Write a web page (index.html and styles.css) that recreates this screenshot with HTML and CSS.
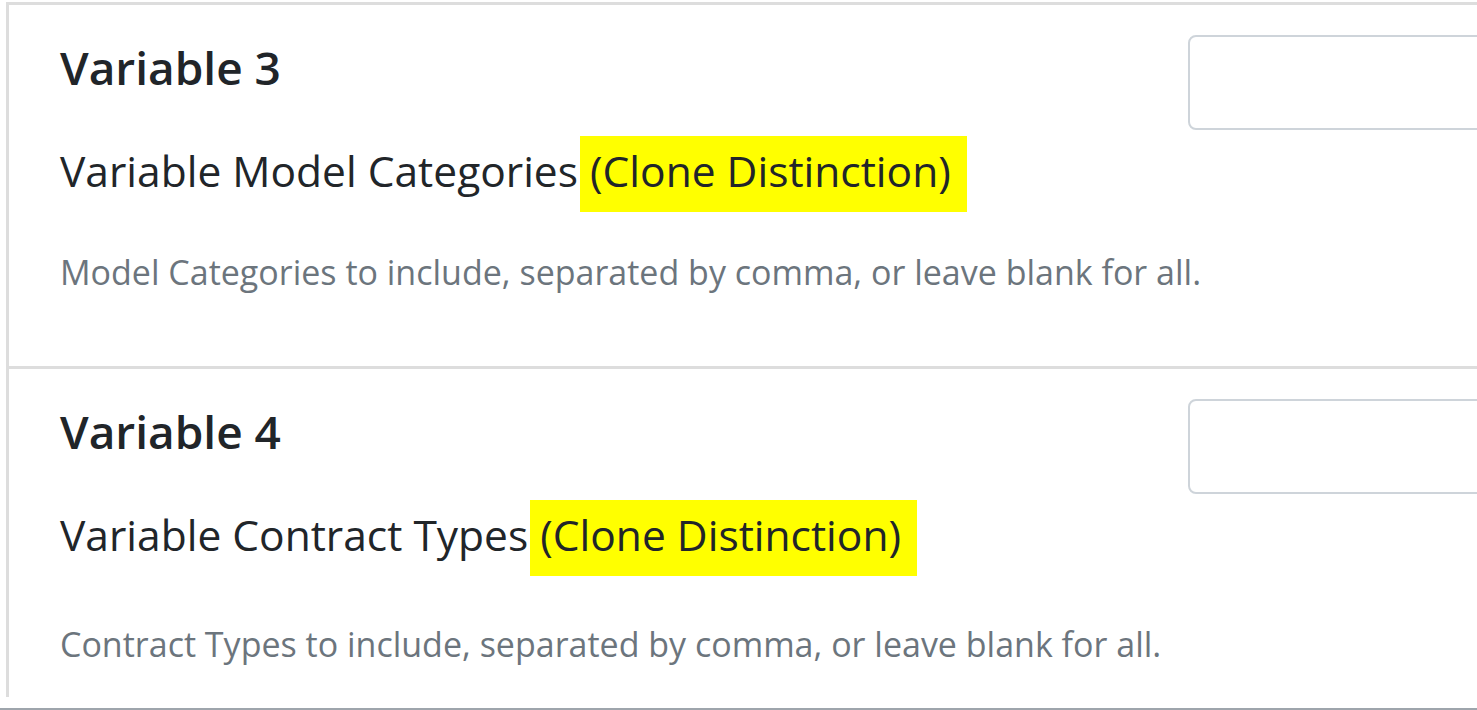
FILE: index.html
```html
<!DOCTYPE html>
<html lang="en">
<head>
    <meta charset="UTF-8">
    <meta name="viewport" content="width=device-width, initial-scale=1.0">
    <title>Variables</title>
    <link rel="stylesheet" href="styles.css">
</head>
<body>
    <div class="page">
        <div class="variables">
            <!-- Variable 3 -->
            <div class="variable-row">
                <div class="variable-info">
                    <h4 class="variable-title">Variable 3</h4>
                    <div class="variable-label">Variable Model Categories <span class="clone-tag">(Clone Distinction)</span></div>
                    <div class="variable-help">Model Categories to include, separated by comma, or leave blank for all.</div>
                </div>
                <input class="variable-input" type="text">
            </div>

            <!-- Variable 4 -->
            <div class="variable-row">
                <div class="variable-info">
                    <h4 class="variable-title">Variable 4</h4>
                    <div class="variable-label">Variable Contract Types <span class="clone-tag">(Clone Distinction)</span></div>
                    <div class="variable-help">Contract Types to include, separated by comma, or leave blank for all.</div>
                </div>
                <input class="variable-input" type="text">
            </div>
        </div>
    </div>
    <div class="window-edge"></div>
</body>
</html>
```

FILE: styles.css
```css
body {
    margin: 0;
    height: 710px;
    overflow: hidden;
    font-family: "Open Sans", "Noto Sans", sans-serif;
    color: #212529;
    background-color: #ffffff;
    display: flex;
    flex-direction: column;
}

.page {
    flex: 1;
    overflow: hidden;
    padding-top: 2px;
    padding-left: 6px;
    padding-bottom: 11px;
}

.variables {
    border-left: 3px solid #dddddd;
    height: 100%;
    overflow: hidden;
}

.variable-row {
    border-top: 3px solid #dddddd;
    display: flex;
    align-items: flex-start;
    padding-left: 51px;
    padding-top: 32px;
    padding-bottom: 66px;
}

.variable-info {
    width: 1128px;
    flex-shrink: 0;
}

.variable-title {
    margin: 0;
    font-size: 46px;
    font-weight: 600;
    line-height: 60px;
}

.variable-label {
    margin-top: 43px;
    font-size: 42.5px;
    line-height: 61px;
    white-space: nowrap;
}

.clone-tag {
    background-color: #ffff00;
    padding: 6px 16px 13px 10px;
    margin-left: -9px;
}

.variable-help {
    margin-top: 44px;
    font-size: 34px;
    line-height: 55px;
    color: #6c757d;
    white-space: nowrap;
}

/* second block sits a little lower in the original */
.variable-row + .variable-row .variable-help {
    margin-top: 52px;
}

.variable-input {
    flex-shrink: 0;
    width: 450px;
    height: 95px;
    margin-top: -2px;
    box-sizing: border-box;
    border: 2px solid #ced4da;
    border-radius: 8px;
    background-color: #ffffff;
}

.window-edge {
    height: 2px;
    background-color: #9ea5ac;
}
```
